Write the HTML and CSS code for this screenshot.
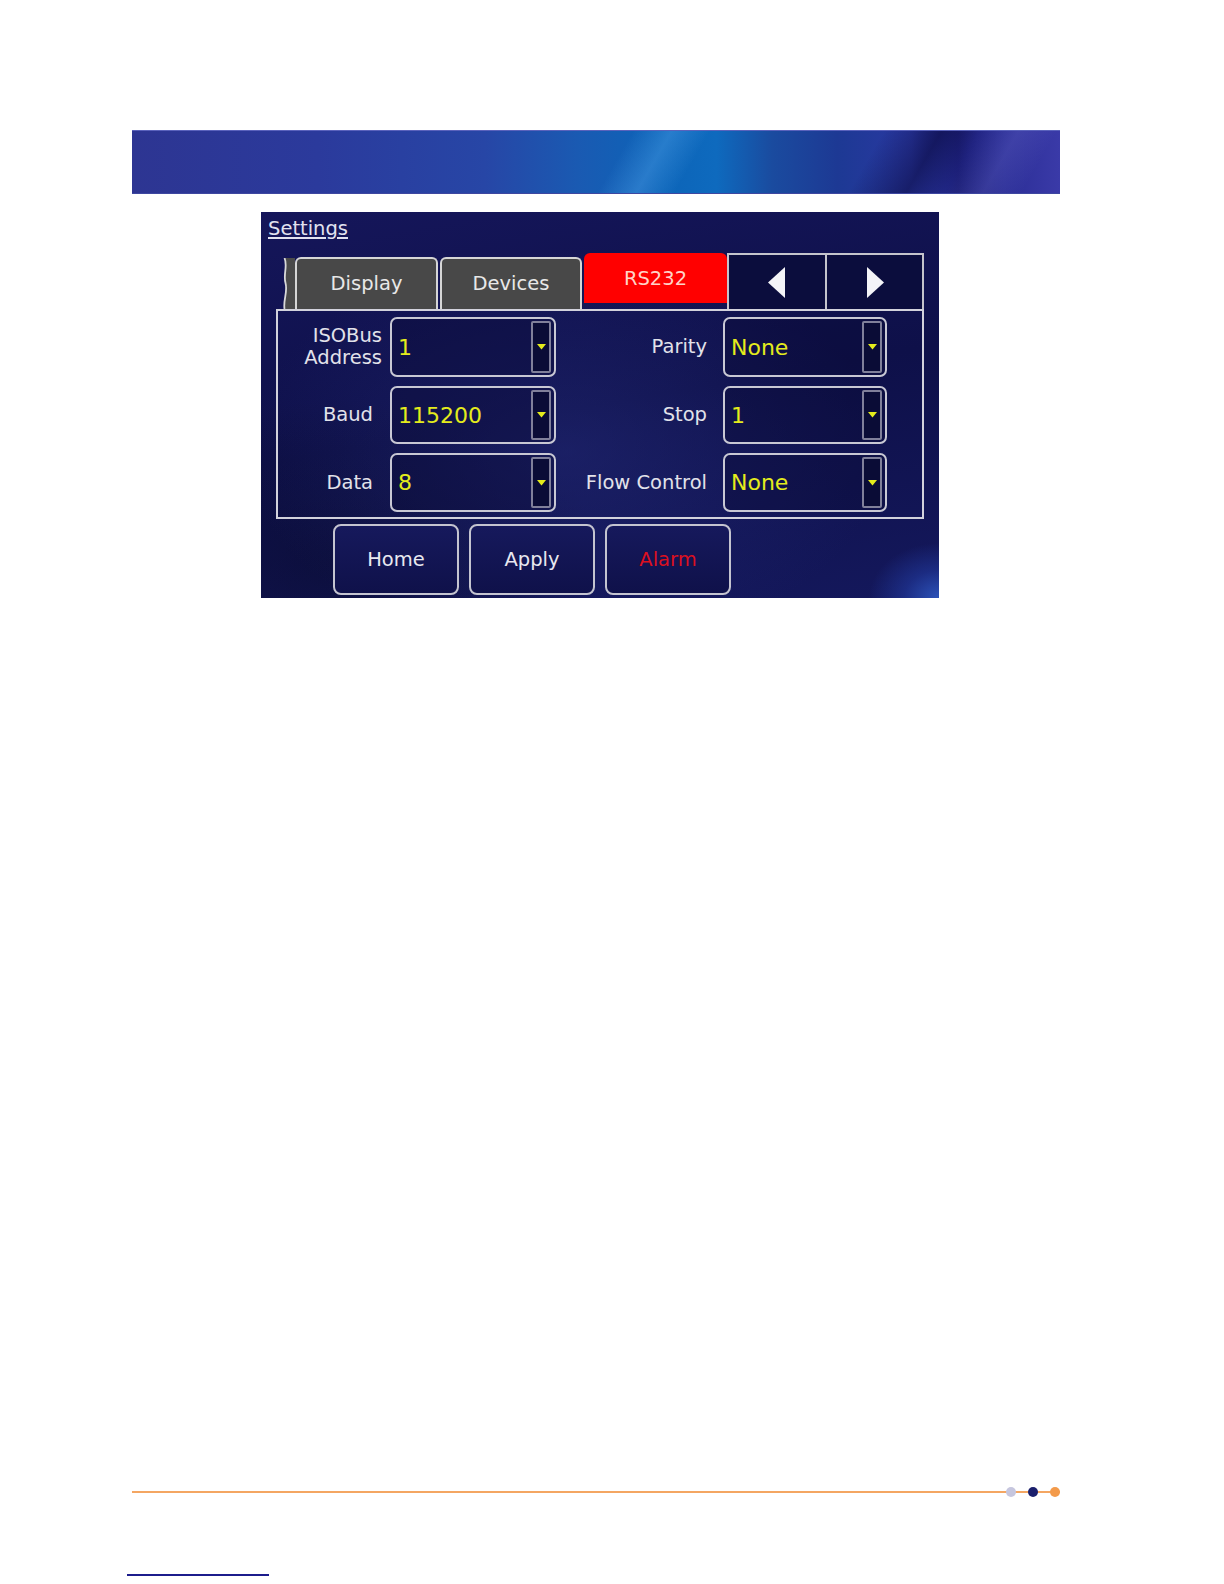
FILE: index.html
```html
<!DOCTYPE html>
<html>
<head>
<meta charset="utf-8">
<title>Settings - RS232</title>
<link rel="stylesheet" href="styles.css">
</head>
<body>
<div class="page">
  <div class="banner"></div>

  <div class="screen">
    <div class="title">Settings</div>

    <div class="tabs">
      <div class="tab-curl">
        <svg width="13" height="51" viewBox="0 0 13 51">
          <path d="M2.5 0 C6 8 1 16 3.5 25 C6 34 1 42 2.5 51 L13 51 L13 0 Z" fill="#4a4a4a"/>
          <path d="M2.5 0 C6 8 1 16 3.5 25 C6 34 1 42 2.5 51" fill="none" stroke="#d8d8d8" stroke-width="1.8"/>
        </svg>
      </div>
      <div class="tab">Display</div>
      <div class="tab tab-gap">Devices</div>
      <div class="tab tab-gap tab-active">RS232</div>
      <div class="tab-nav">
        <svg width="18" height="31" viewBox="0 0 18 31"><path d="M17 0 L17 31 L0 15.5 Z" fill="#f4f4f8"/></svg>
      </div>
      <div class="tab-nav tab-nav-last">
        <svg width="18" height="31" viewBox="0 0 18 31"><path d="M1 0 L1 31 L18 15.5 Z" fill="#f4f4f8"/></svg>
      </div>
    </div>

    <div class="form">
      <div class="label label-two">ISOBus<br>Address</div>
      <div class="select"><span class="value">1</span><span class="drop"><svg width="9" height="6" viewBox="0 0 9 6"><path d="M0 0 L9 0 L4.5 5.5 Z" fill="#e4ec1c"/></svg></span></div>
      <div class="label label-right">Parity</div>
      <div class="select"><span class="value">None</span><span class="drop"><svg width="9" height="6" viewBox="0 0 9 6"><path d="M0 0 L9 0 L4.5 5.5 Z" fill="#e4ec1c"/></svg></span></div>

      <div class="label label-short">Baud</div>
      <div class="select"><span class="value">115200</span><span class="drop"><svg width="9" height="6" viewBox="0 0 9 6"><path d="M0 0 L9 0 L4.5 5.5 Z" fill="#e4ec1c"/></svg></span></div>
      <div class="label label-right">Stop</div>
      <div class="select"><span class="value">1</span><span class="drop"><svg width="9" height="6" viewBox="0 0 9 6"><path d="M0 0 L9 0 L4.5 5.5 Z" fill="#e4ec1c"/></svg></span></div>

      <div class="label label-short">Data</div>
      <div class="select"><span class="value">8</span><span class="drop"><svg width="9" height="6" viewBox="0 0 9 6"><path d="M0 0 L9 0 L4.5 5.5 Z" fill="#e4ec1c"/></svg></span></div>
      <div class="label label-right">Flow Control</div>
      <div class="select"><span class="value">None</span><span class="drop"><svg width="9" height="6" viewBox="0 0 9 6"><path d="M0 0 L9 0 L4.5 5.5 Z" fill="#e4ec1c"/></svg></span></div>
    </div>

    <div class="actions">
      <button class="btn">Home</button>
      <button class="btn">Apply</button>
      <button class="btn btn-alarm">Alarm</button>
    </div>
  </div>

  <div class="footer-rule">
    <span class="dot dot-light"></span>
    <span class="dot dot-navy"></span>
    <span class="dot dot-orange"></span>
  </div>
  <div class="footer-line"></div>
</div>
</body>
</html>
```

FILE: styles.css
```css
html, body {
  margin: 0;
  padding: 0;
  background: #ffffff;
}

body {
  font-family: "DejaVu Sans", "Liberation Sans", sans-serif;
}

.page {
  width: 1224px;
  height: 1584px;
  overflow: hidden;
}

/* ---------- top banner ---------- */
.banner {
  margin: 130px 0 0 132px;
  width: 928px;
  height: 64px;
  box-sizing: border-box;
  border-top: 1px solid #5a62bc;
  border-bottom: 1px solid #3e47a0;
  background:
    linear-gradient(120deg,
      rgba(255,255,255,0) 52%,
      rgba(90,170,240,0.35) 56%,
      rgba(255,255,255,0) 60%,
      rgba(255,255,255,0) 78%,
      rgba(8,8,60,0.55) 84%,
      rgba(255,255,255,0) 88%,
      rgba(140,140,230,0.18) 92%,
      rgba(255,255,255,0) 96%),
    linear-gradient(90deg,
      #2d3592 0%,
      #2b3a9c 20%,
      #2746a6 38%,
      #1a5ab2 48%,
      #0c64b8 57%,
      #0e6abe 63%,
      #1a4b9f 69%,
      #1d3994 76%,
      #2a38a2 84%,
      #1c1f78 89%,
      #2b2e96 94%,
      #3a3aa8 100%);
}

/* ---------- device screen ---------- */
.screen {
  margin: 18px 0 0 261px;
  width: 678px;
  height: 386px;
  box-sizing: border-box;
  display: flex;
  flex-direction: column;
  background:
    radial-gradient(70px 55px at 100% 100%, #2c52b8 0%, rgba(36,64,170,0.5) 50%, rgba(20,30,110,0) 100%),
    radial-gradient(320px 200px at 45% 62%, rgba(40,48,130,0.45), rgba(20,20,80,0)),
    radial-gradient(260px 160px at 12% 90%, rgba(8,10,40,0.5), rgba(8,10,40,0)),
    linear-gradient(170deg, #15165a 0%, #0e1049 50%, #14185c 100%);
}

.title {
  height: 41px;
  box-sizing: border-box;
  padding: 5px 0 0 7px;
  font-size: 19.5px;
  line-height: 24px;
  color: #e2e2f0;
  text-decoration: underline;
  text-underline-offset: 2px;
  text-decoration-thickness: 1.5px;
}

/* ---------- tabs ---------- */
.tabs {
  display: flex;
  align-items: flex-end;
  height: 56px;
  margin-left: 21px;
  width: 642px;
}

.tab-curl {
  width: 13px;
  height: 51px;
}

.tab-curl svg {
  display: block;
}

.tab {
  width: 143px;
  height: 52px;
  box-sizing: border-box;
  border: 2px solid #d6d6d6;
  border-bottom: none;
  border-radius: 6px 6px 0 0;
  background: #484848;
  color: #e8e8e8;
  font-size: 19.5px;
  display: flex;
  align-items: center;
  justify-content: center;
  padding-bottom: 2px;
}

.tab-gap {
  margin-left: 2px;
  width: 142px;
}

.tab-active {
  width: 143px;
  height: 50px;
  margin-bottom: 6px;
  border: none;
  border-radius: 6px 6px 0 0;
  background: #ff0000;
  color: #ffd3c8;
  padding-bottom: 0;
}

.tab-nav {
  width: 98px;
  height: 56px;
  box-sizing: border-box;
  border-top: 2px solid #c4c4cc;
  border-left: 2px solid #c4c4cc;
  background: #0b0d3d;
  display: flex;
  align-items: center;
  justify-content: center;
}

.tab-nav svg {
  display: block;
}

.tab-nav-last {
  width: 99px;
  border-right: 2px solid #c4c4cc;
}

/* ---------- form panel ---------- */
.form {
  margin: 0 15px;
  height: 210px;
  box-sizing: border-box;
  border: 2px solid #d2d2dc;
  padding-top: 6px;
  display: grid;
  grid-template-columns: 112px 166px 167px 164px;
  grid-template-rows: 60px 58px 59px;
  row-gap: 9px;
}

.label {
  display: flex;
  align-items: center;
  justify-content: flex-end;
  text-align: right;
  padding-right: 8px;
  font-size: 19.5px;
  line-height: 22px;
  color: #e2e2ea;
}

.label-short {
  padding-right: 17px;
}

.label-right {
  padding-right: 16px;
}

.select {
  display: flex;
  align-items: center;
  box-sizing: border-box;
  border: 2px solid #c8c8d4;
  border-radius: 7px;
  background: rgba(8, 10, 48, 0.35);
}

.value {
  padding-left: 6px;
  font-size: 22px;
  color: #e4ec1c;
}

.drop {
  margin: 2px 3px 2px auto;
  align-self: stretch;
  width: 20px;
  box-sizing: border-box;
  border: 2px solid #80809a;
  border-radius: 2px;
  background: #0a0c36;
  display: flex;
  align-items: center;
  justify-content: center;
}

.drop svg {
  display: block;
}

/* ---------- buttons ---------- */
.actions {
  display: flex;
  gap: 10px;
  margin: 5px 0 0 72px;
}

.btn {
  width: 126px;
  height: 71px;
  box-sizing: border-box;
  border: 2px solid #c4c4d0;
  border-radius: 8px;
  background: linear-gradient(180deg, #16195c 0%, #0f114a 100%);
  color: #e8e8f0;
  font-family: "DejaVu Sans", "Liberation Sans", sans-serif;
  font-size: 19.5px;
  padding: 0;
}

.btn-alarm {
  color: #dc1020;
}

/* ---------- footer ---------- */
.footer-rule {
  margin: 889px 0 0 132px;
  width: 928px;
  height: 10px;
  display: flex;
  align-items: center;
  justify-content: flex-end;
  gap: 12px;
  background: linear-gradient(#f4a662, #f4a662) center / 100% 2px no-repeat;
}

.dot {
  width: 10px;
  height: 10px;
  border-radius: 50%;
}

.dot-light {
  background: #c6c6de;
}

.dot-navy {
  background: #1b1f6c;
}

.dot-orange {
  background: #f39a4a;
}

.footer-line {
  margin: 77px 0 0 127px;
  width: 142px;
  height: 2px;
  background: #1c1c8c;
}
```
